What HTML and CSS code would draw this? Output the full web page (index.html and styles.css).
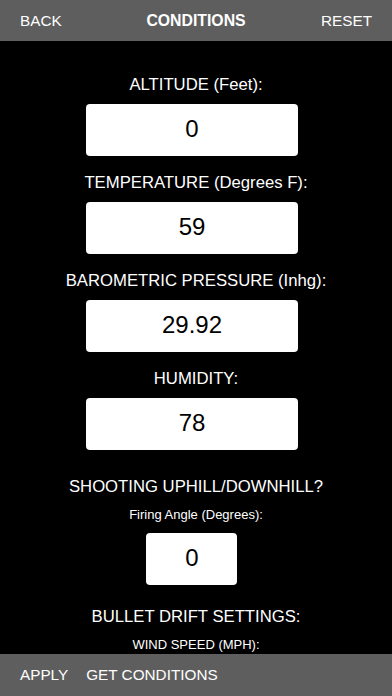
FILE: index.html
```html
<!DOCTYPE html>
<html>
<head>
<meta charset="utf-8">
<link rel="stylesheet" href="styles.css">
</head>
<body>
<div class="app">
  <header class="topbar">
    <span class="nav-btn">BACK</span>
    <span class="title">CONDITIONS</span>
    <span class="nav-btn right">RESET</span>
  </header>
  <main class="content">
    <div class="field">
      <div class="label">ALTITUDE (Feet):</div>
      <div class="box">0</div>
    </div>
    <div class="field">
      <div class="label">TEMPERATURE (Degrees F):</div>
      <div class="box">59</div>
    </div>
    <div class="field">
      <div class="label">BAROMETRIC PRESSURE (Inhg):</div>
      <div class="box">29.92</div>
    </div>
    <div class="field">
      <div class="label">HUMIDITY:</div>
      <div class="box">78</div>
    </div>
    <div class="section">
      <div class="label">SHOOTING UPHILL/DOWNHILL?</div>
      <div class="sublabel">Firing Angle (Degrees):</div>
      <div class="box small">0</div>
    </div>
    <div class="section drift">
      <div class="label">BULLET DRIFT SETTINGS:</div>
      <div class="sublabel">WIND SPEED (MPH):</div>
    </div>
  </main>
  <footer class="bottombar">
    <span class="nav-btn">APPLY</span>
    <span class="nav-btn">GET CONDITIONS</span>
  </footer>
</div>
</body>
</html>
```
FILE: styles.css
```css
* { box-sizing: border-box; }
html, body { margin: 0; padding: 0; background: #000; }
body {
  font-family: "Liberation Sans", Arial, sans-serif;
  color: #fff;
}
.app {
  width: 392px;
  height: 696px;
  display: flex;
  flex-direction: column;
  overflow: hidden;
}
.topbar {
  height: 41px;
  flex: 0 0 41px;
  background: #5e5e5e;
  display: grid;
  grid-template-columns: 1fr auto 1fr;
  align-items: center;
  padding: 0 20px;
  font-size: 15.3px;
}
.nav-btn.right { justify-self: end; }
.title { font-weight: bold; font-size: 15.8px; }
.content {
  flex: 1;
  overflow: hidden;
  display: flex;
  flex-direction: column;
  align-items: center;
  padding-top: 34px;
}
.field {
  display: flex;
  flex-direction: column;
  align-items: center;
  margin-bottom: 17px;
}
.label {
  font-size: 16.7px;
  line-height: 20px;
  margin-bottom: 9px;
}
.box {
  width: 212px;
  height: 52px;
  margin-right: 8px;
  background: #fff;
  color: #000;
  border-radius: 4px;
  display: flex;
  align-items: center;
  justify-content: center;
  font-size: 24px;
  padding-bottom: 3px;
}
.box.small { width: 91px; }
.section {
  display: flex;
  flex-direction: column;
  align-items: center;
  margin-top: 10px;
}
.section .label { margin-bottom: 10px; }
.section.drift { margin-top: 22px; }
.sublabel {
  font-size: 13px;
  line-height: 16px;
  margin-bottom: 10px;
}
.bottombar {
  height: 42px;
  flex: 0 0 42px;
  background: #5e5e5e;
  display: flex;
  align-items: center;
  gap: 18px;
  padding: 0 20px;
  font-size: 15.3px;
}
```
